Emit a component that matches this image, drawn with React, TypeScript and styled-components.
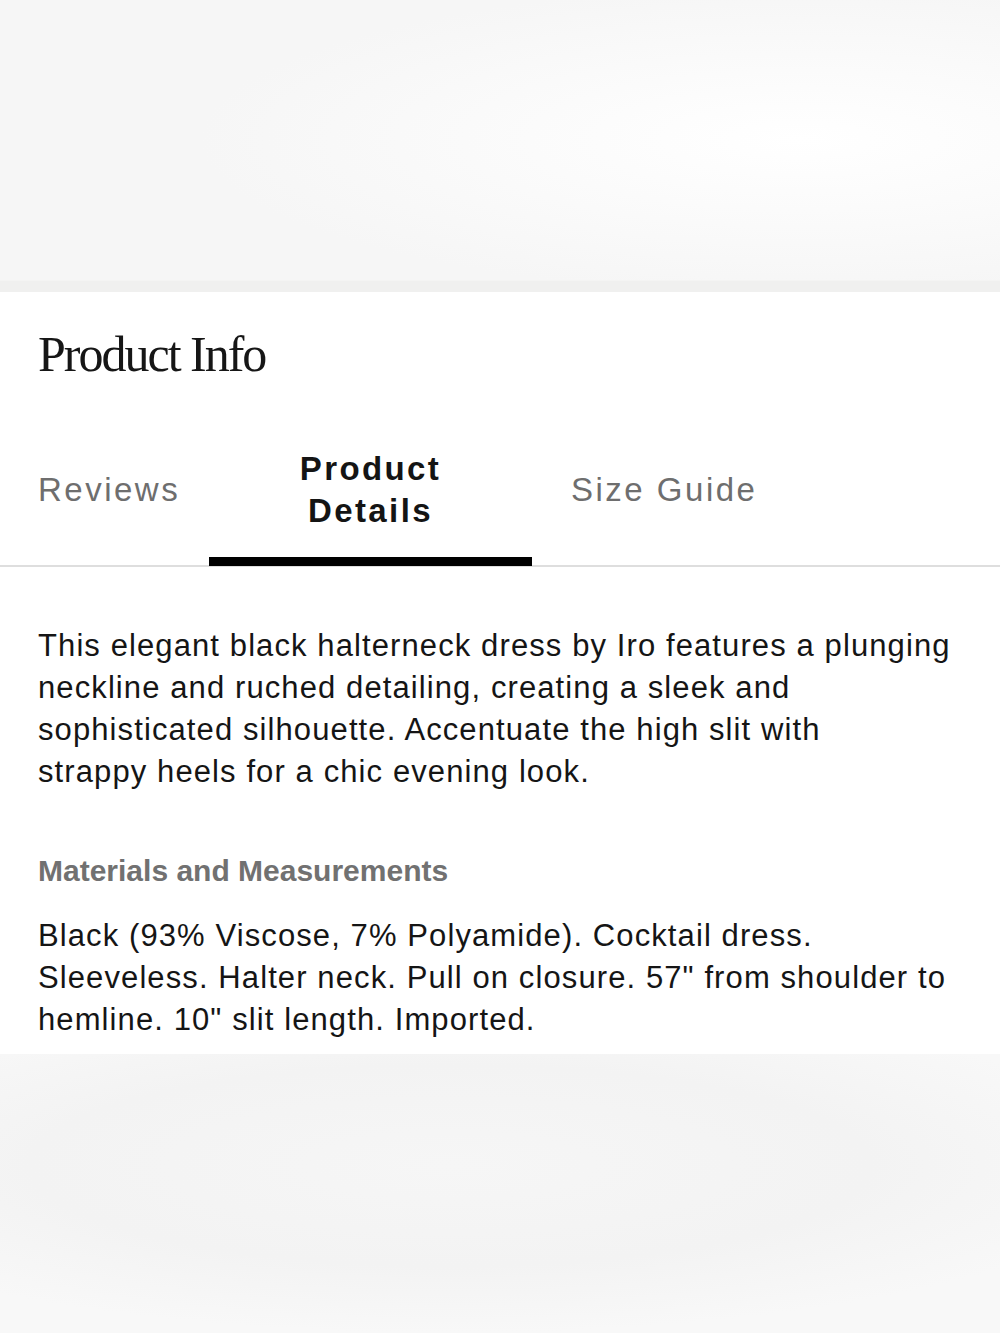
import React from "react";
import styled, { createGlobalStyle } from "styled-components";

const Global = createGlobalStyle`
  html, body { margin: 0; padding: 0; background: #f6f6f6; }
  #root { width: 1000px; }
`;

const Page = styled.div`
  width: 1000px;
  min-height: 1333px;
  display: flex;
  flex-direction: column;
  background: #f4f4f4;
`;

const Backdrop = styled.div<{ $h: number }>`
  height: ${(p) => p.$h}px;
  background: radial-gradient(ellipse 60% 55% at 80% 50%, #ffffff 0%, #fbfbfb 45%, #f6f6f6 100%);
`;

const BottomBackdrop = styled.div`
  flex: 1;
  background: radial-gradient(ellipse 70% 60% at 45% 40%, #f6f6f6 0%, #f3f3f3 60%, #f8f8f8 100%);
`;

const Divider = styled.div`
  height: 12px;
  background: #f0f0ef;
  border-top: 1px solid #f4f4f3;
  box-sizing: border-box;
`;

const Panel = styled.section`
  background: #ffffff;
  padding: 34px 0 13px;
  display: flex;
  flex-direction: column;
`;

const Title = styled.h1`
  margin: 0 0 0 38px;
  font-family: "Liberation Serif", "DejaVu Serif", serif;
  font-weight: 400;
  font-size: 50px;
  letter-spacing: -2px;
  line-height: 56px;
  color: #161616;
`;

const TabBar = styled.div`
  margin-top: 66px;
  display: flex;
  align-items: stretch;
  border-bottom: 2px solid #dedede;
  padding-left: 38px;
`;

const Tab = styled.button<{ $active?: boolean; $width: number; $inset?: number }>`
  appearance: none;
  border: none;
  background: transparent;
  padding: 0 0 33px ${(p) => p.$inset ?? 0}px;
  margin: 0;
  width: ${(p) => p.$width}px;
  box-sizing: border-box;
  font-family: "Liberation Sans", Arial, sans-serif;
  font-size: 33px;
  line-height: 42px;
  letter-spacing: ${(p) => (p.$active ? "2.4px" : "2.5px")};
  font-weight: ${(p) => (p.$active ? 700 : 400)};
  color: ${(p) => (p.$active ? "#141414" : "#6e6e6e")};
  text-align: ${(p) => (p.$active ? "center" : "left")};
  display: flex;
  align-items: center;
  justify-content: ${(p) => (p.$active ? "center" : "flex-start")};
  position: relative;
  cursor: pointer;
  &::after {
    content: "";
    display: ${(p) => (p.$active ? "block" : "none")};
    position: absolute;
    left: 0;
    right: 0;
    bottom: -1px;
    height: 9px;
    background: #000;
  }
`;

const Content = styled.div`
  padding: 58px 38px 0;
  display: flex;
  flex-direction: column;
`;

const Paragraph = styled.p`
  margin: 0;
  font-family: "Liberation Sans", Arial, sans-serif;
  font-size: 31px;
  line-height: 42px;
  letter-spacing: 1.1px;
  color: #151515;
  max-width: 920px;
`;

const SubHeading = styled.h2`
  margin: 58px 0 24px;
  font-family: "Liberation Sans", Arial, sans-serif;
  font-weight: 700;
  font-size: 30px;
  line-height: 40px;
  letter-spacing: 0px;
  color: #717171;
`;

export default function App() {
  return (
    <>
      <Global />
      <Page>
        <Backdrop $h={280} />
        <Divider />
        <Panel>
          <Title>Product Info</Title>
          <TabBar>
            <Tab $width={171}>Reviews</Tab>
            <Tab $width={323} $active>
              Product
              <br />
              Details
            </Tab>
            <Tab $width={260} $inset={39}>Size Guide</Tab>
          </TabBar>
          <Content>
            <Paragraph>
              This elegant black halterneck dress by Iro features a plunging
              <br />
              neckline and ruched detailing, creating a sleek and
              <br />
              sophisticated silhouette. Accentuate the high slit with
              <br />
              strappy heels for a chic evening look.
            </Paragraph>
            <SubHeading>Materials and Measurements</SubHeading>
            <Paragraph>
              Black (93% Viscose, 7% Polyamide). Cocktail dress. Sleeveless. Halter neck. Pull on
              closure. 57" from shoulder to hemline. 10" slit length. Imported.
            </Paragraph>
          </Content>
        </Panel>
        <BottomBackdrop />
      </Page>
    </>
  );
}
